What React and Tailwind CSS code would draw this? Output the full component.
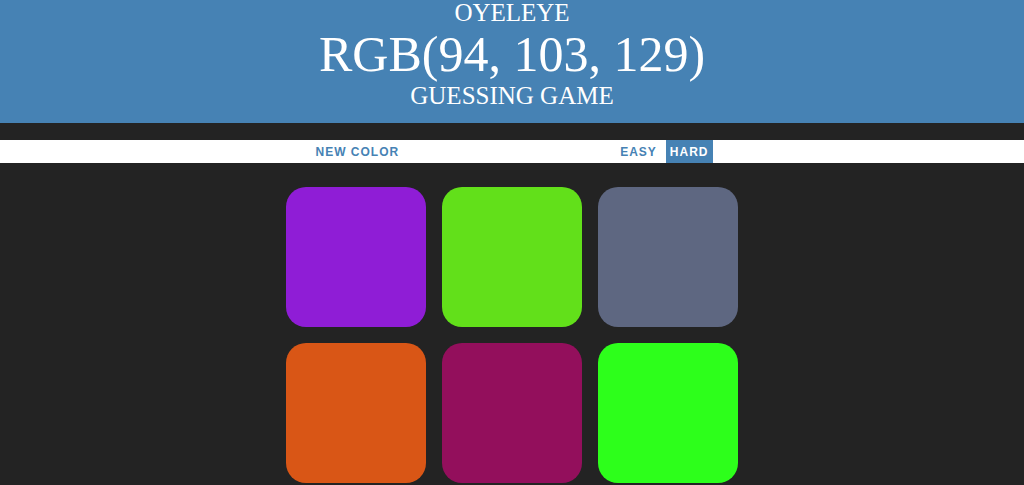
const squares = [
  "bg-[#8f1dd6]",
  "bg-[#62e01a]",
  "bg-[#5e6781]",
  "bg-[#d95616]",
  "bg-[#930f5c]",
  "bg-[#2dff1b]",
];

export default function App() {
  return (
    <div className="min-h-[485px] bg-[#232323] font-['Liberation_Sans',Arial,sans-serif]">
      {/* header */}
      <div className="h-[123px] bg-[#4682b4] text-center text-white font-['Liberation_Serif','Times_New_Roman',serif]">
        <div className="text-[25px] leading-[26px] uppercase">Oyeleye</div>
        <div className="text-[50px] leading-[56px]">RGB(94, 103, 129)</div>
        <div className="text-[25px] leading-[28px] uppercase">Guessing Game</div>
      </div>

      {/* stripe */}
      <div className="mt-[17px] flex h-[23px] items-stretch justify-center bg-white text-[12px] font-bold uppercase tracking-[1px] text-[#4682b4]">
        <button className="flex items-center px-1 uppercase">New Color</button>
        <span className="mx-[4px] w-[205px]"></span>
        <button className="flex items-center px-1 uppercase">Easy</button>
        <button className="ml-[5px] flex items-center bg-[#4682b4] px-1 uppercase text-white">
          Hard
        </button>
      </div>

      {/* squares */}
      <div className="mx-auto mt-[24px] grid w-[452px] grid-cols-3 gap-[16px]">
        {squares.map((c, i) => (
          <div key={i} className={`h-[140px] w-[140px] rounded-[20px] ${c}`}></div>
        ))}
      </div>
    </div>
  );
}
